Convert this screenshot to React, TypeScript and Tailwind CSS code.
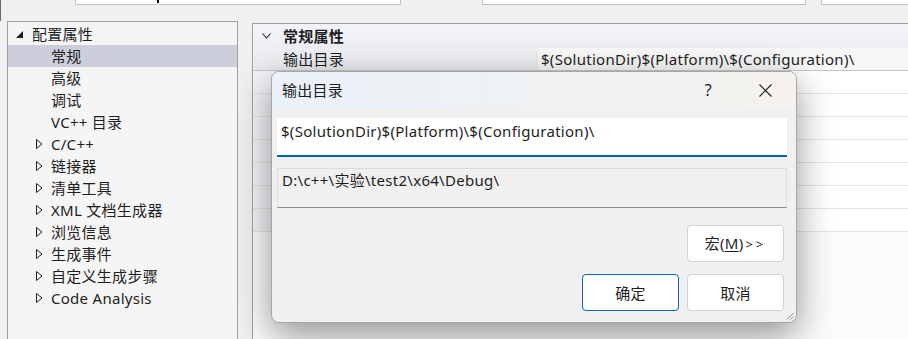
import React from "react";

const font = { fontFamily: '"Noto Sans", "Noto Sans CJK SC", sans-serif' };

function RootTri() {
  return (
    <svg width="7" height="7" viewBox="0 0 7 7" className="shrink-0">
      <polygon points="7,0 7,7 0,7" fill="#1e1e1e" />
    </svg>
  );
}

function ExpandTri() {
  return (
    <svg width="7" height="10" viewBox="0 0 7 10" className="shrink-0">
      <polygon points="0.5,0.5 6,5 0.5,9.5" fill="none" stroke="#1e1e1e" strokeWidth="1" />
    </svg>
  );
}

type Item = { label: string; expand?: boolean; selected?: boolean };

const items: Item[] = [
  { label: "常规", selected: true },
  { label: "高级" },
  { label: "调试" },
  { label: "VC++ 目录" },
  { label: "C/C++", expand: true },
  { label: "链接器", expand: true },
  { label: "清单工具", expand: true },
  { label: "XML 文档生成器", expand: true },
  { label: "浏览信息", expand: true },
  { label: "生成事件", expand: true },
  { label: "自定义生成步骤", expand: true },
  { label: "Code Analysis", expand: true },
];

export default function App() {
  return (
    <div
      className="w-[908px] h-[339px] relative overflow-hidden bg-[#f0f0f0] text-[15px] text-[#1e1e1e] tracking-[0.28px]"
      style={font}
    >
      {/* top strip */}
      <div className="h-[21px] border-l border-[#6a6a6a] flex items-start">
        <div className="ml-[74px] w-[326px] h-[5px] bg-white border-x border-b border-[#c4c4c4] relative">
          <div className="absolute left-[81px] top-0 w-[2px] h-[3px] bg-black" />
        </div>
        <div className="ml-[81px] w-[324px] h-[5px] bg-white border-x border-b border-[#c4c4c4]" />
        <div className="ml-[15px] flex-1 h-[5px] bg-white border-l border-b border-[#c4c4c4]" />
      </div>

      {/* main area */}
      <div className="flex h-[318px]">
        {/* tree */}
        <div className="ml-[7px] w-[231px] h-[330px] bg-[#f5f5f5] border-x border-t border-[#a0a0a0] pt-[1px]">
          <div className="h-[22px] flex items-center pl-[8px] leading-[22px]">
            <RootTri />
            <span className="ml-[9px]">配置属性</span>
          </div>
          {items.map((it) => (
            <div
              key={it.label}
              className={
                it.selected
                  ? "h-[22px] flex items-center leading-[22px] bg-[#cccedb]"
                  : "h-[22px] flex items-center leading-[22px]"
              }
            >
              <div className="w-[43px] flex justify-end shrink-0">
                {it.expand ? <div className="w-[15px]"><ExpandTri /></div> : null}
              </div>
              <span>{it.label}</span>
            </div>
          ))}
        </div>

        {/* property grid */}
        <div className="ml-[14px] mt-[2px] flex-1 h-[330px] bg-[#fbfbfb] border-l border-t border-[#a0a0a0]">
          <div className="h-[24px] flex items-center bg-gradient-to-b from-[#f2f4f8] to-[#eceef3]">
            <svg width="9" height="6" viewBox="0 0 9 6" className="ml-[9px] shrink-0">
              <polyline points="0.5,0.5 4.5,5 8.5,0.5" fill="none" stroke="#1e1e1e" strokeWidth="1.1" />
            </svg>
            <span className="ml-[12px] font-bold leading-[22px]">常规属性</span>
          </div>
          <div className="h-[23px] flex border-b border-[#c8c8c8]">
            <div className="w-[285px] bg-gradient-to-b from-[#eef0f4] to-[#e8eaee] pl-[30px] leading-[23px]">输出目录</div>
            <div className="flex-1 bg-[#f7f7f7] pl-[3px] leading-[23px]">$(SolutionDir)$(Platform)\$(Configuration)\</div>
          </div>
          {[0, 1, 2, 3, 4, 5, 6].map((i) => (
            <div key={i} className="h-[23px] flex border-b border-[#e4e4e4]">
              <div className="w-[285px] bg-[#f3f4f7]" />
              <div className="flex-1 bg-white" />
            </div>
          ))}
        </div>
      </div>

      {/* dialog */}
      <div className="absolute left-[271px] top-[71px] w-[526px] h-[252px] rounded-[8px] border border-[#a6a6a6] bg-[#f0f0f0] overflow-hidden shadow-[0_12px_36px_rgba(0,0,0,0.42)] flex flex-col">
        <div className="h-[36px] shrink-0 flex items-center bg-gradient-to-r from-[#eaf1f9] to-[#f5f2ee]">
          <span className="ml-[10px] leading-[20px]">输出目录</span>
          <span className="ml-auto mr-[47px] leading-[20px] text-[16px]">?</span>
          <svg width="13" height="13" viewBox="0 0 13 13" className="mr-[24px]">
            <line x1="0.5" y1="0.5" x2="12.5" y2="12.5" stroke="#1e1e1e" strokeWidth="1.1" />
            <line x1="12.5" y1="0.5" x2="0.5" y2="12.5" stroke="#1e1e1e" strokeWidth="1.1" />
          </svg>
        </div>
        <div className="flex flex-col pl-[5px] pt-[10px]">
          <div className="w-[510px] h-[39px] bg-white border-b-2 border-[#005fb8] pl-[4px] pt-[2px] leading-[22px]">
            $(SolutionDir)$(Platform)\$(Configuration)\
          </div>
          <div className="mt-[11px] w-[510px] h-[40px] bg-[#f0f0f0] border border-[#dcdcdc] border-b-[#8a8a8a] pl-[4px] leading-[22px]">
            D:\c++\实验\test2\x64\Debug\
          </div>
          <div className="flex justify-end w-[507px] mt-[17px]">
            <button className="w-[97px] h-[37px] bg-white border border-[#d0d0d0] rounded-[4px] leading-[20px]">
              宏(<span className="underline underline-offset-2">M</span>)<span className="text-[13px] tracking-[3px] ml-[2px]">&gt;&gt;</span>
            </button>
          </div>
          <div className="flex justify-end gap-[8px] w-[507px] mt-[12px]">
            <button className="w-[97px] h-[37px] bg-white border border-[#0067c0] rounded-[4px] leading-[20px]">确定</button>
            <button className="w-[97px] h-[37px] bg-white border border-[#d0d0d0] rounded-[4px] leading-[20px]">取消</button>
          </div>
        </div>
        <svg width="8" height="8" viewBox="0 0 8 8" className="absolute right-[2px] bottom-[2px]">
          <line x1="7.5" y1="1" x2="1" y2="7.5" stroke="#8a8a8a" strokeWidth="1" />
          <line x1="7.5" y1="4.5" x2="4.5" y2="7.5" stroke="#8a8a8a" strokeWidth="1" />
        </svg>
      </div>
    </div>
  );
}
